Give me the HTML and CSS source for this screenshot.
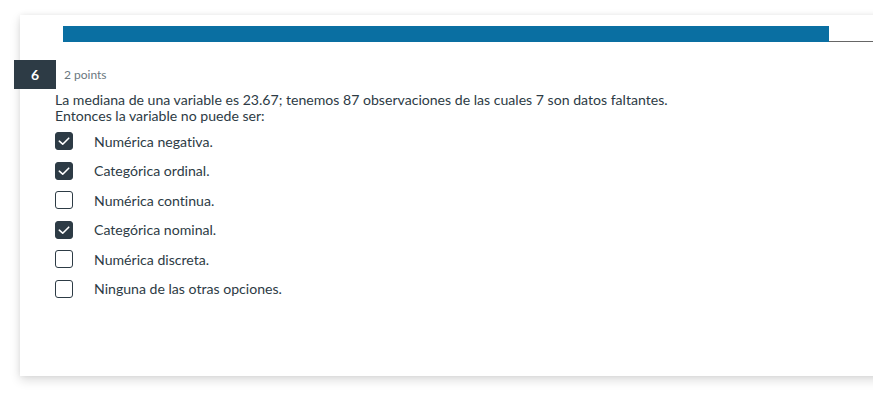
FILE: index.html
```html
<!DOCTYPE html>
<html lang="es">
<head>
<meta charset="utf-8">
<link rel="stylesheet" href="styles.css">
</head>
<body>
<div class="card">
  <div class="progress"><div class="fill"></div><div class="rest"></div></div>
  <div class="qhead">
    <div class="badge">6</div>
    <div class="points">2 points</div>
  </div>
  <div class="qtext">La mediana de una variable es 23.67; tenemos 87 observaciones de las cuales 7 son datos faltantes.<br>Entonces la variable no puede ser:</div>
  <ul class="options">
    <li class="opt"><span class="box on"><svg viewBox="0 0 16 16"><path d="M3.3 8.2l3.4 3 6-6"/></svg></span>Numérica negativa.</li>
    <li class="opt"><span class="box on"><svg viewBox="0 0 16 16"><path d="M3.3 8.2l3.4 3 6-6"/></svg></span>Categórica ordinal.</li>
    <li class="opt"><span class="box"></span>Numérica continua.</li>
    <li class="opt"><span class="box on"><svg viewBox="0 0 16 16"><path d="M3.3 8.2l3.4 3 6-6"/></svg></span>Categórica nominal.</li>
    <li class="opt"><span class="box"></span>Numérica discreta.</li>
    <li class="opt"><span class="box"></span>Ninguna de las otras opciones.</li>
  </ul>
</div>
</body>
</html>
```
FILE: styles.css
```css
html { overflow: hidden; background: #fff; }
body { margin: 0; padding: 0 0 31px; min-height: 407px; box-sizing: border-box; font-family: Lato, "Open Sans", sans-serif; color: #2d3b45; font-variant-ligatures: none; }
.card {
  margin: 15px 0 0 20px;
  width: 900px;
  height: 361px;
  background: #fff;
  box-shadow: 0 4px 10px rgba(0,0,0,0.14), 0 0 5px rgba(0,0,0,0.06);
}
.progress { display: flex; margin-left: 43px; padding-top: 11px; }
.fill { width: 766px; height: 16px; background: #0a6fa2; }
.rest { flex: 1; height: 16px; box-sizing: border-box; border-bottom: 1px solid #666; }
.qhead { display: flex; align-items: center; margin: 18px 0 0 -6px; }
.badge {
  width: 42px; height: 29px; background: #2d3b45; color: #fff;
  font-weight: 700; font-size: 14px;
  display: flex; align-items: center; justify-content: center;
}
.points { margin-left: 8px; font-size: 12px; color: #6b7780; }
.qtext { margin: 3px 0 0 35px; font-size: 14.1px; line-height: 16px; }
.options { list-style: none; margin: 8px 0 0 35px; padding: 0; display: flex; flex-direction: column; gap: 11.6px; }
.opt { display: flex; align-items: center; font-size: 14.1px; height: 18px; }
.box {
  width: 18px; height: 18px; box-sizing: border-box; border: 1px solid #2d3b45;
  border-radius: 3px; margin-right: 21px; flex: none; background: #fff;
}
.box.on { background: #2d3b45; }
.box svg { display: block; width: 16px; height: 16px; }
.box svg path { fill: none; stroke: #fff; stroke-width: 1.6; stroke-linecap: round; stroke-linejoin: round; }
```
